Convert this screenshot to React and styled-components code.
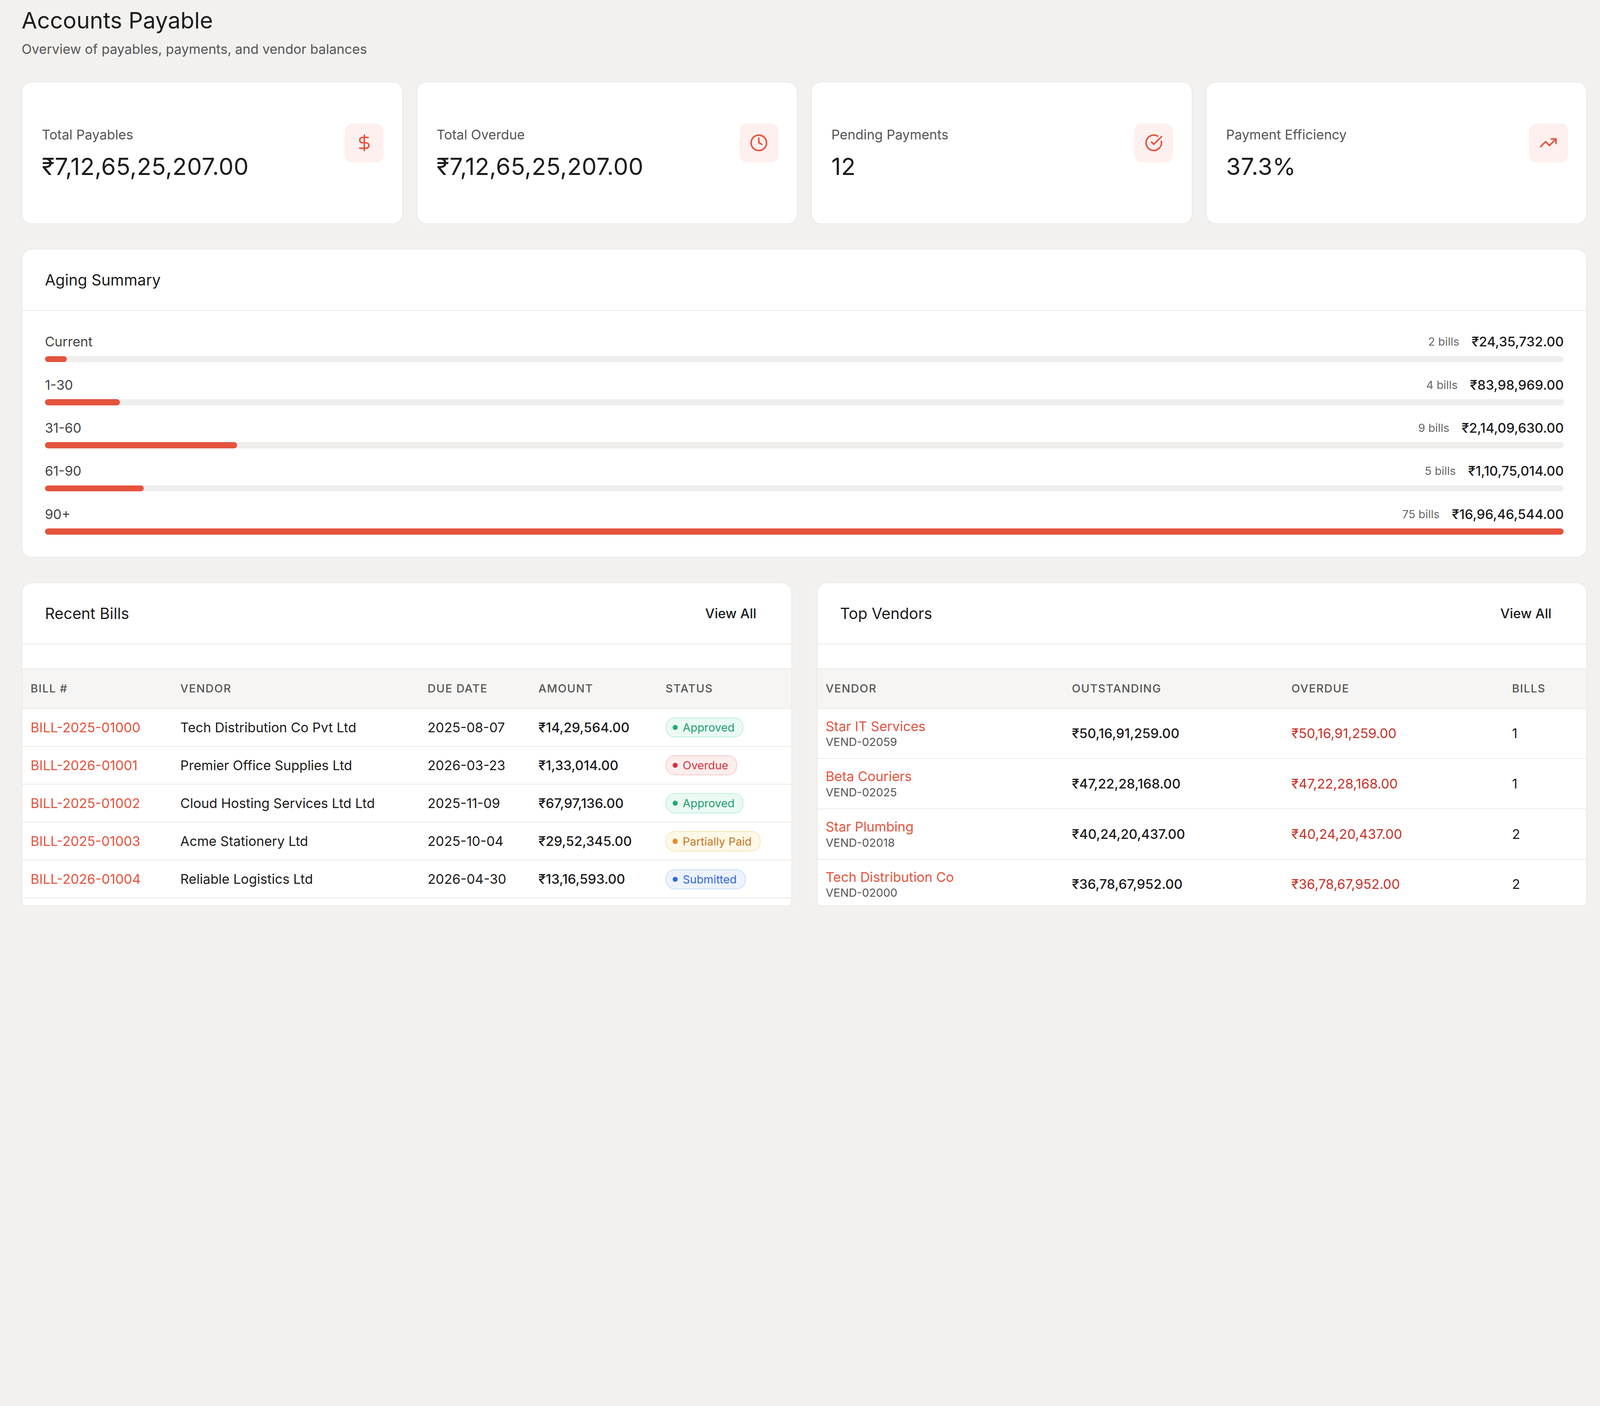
import React from 'react'
import styled, { createGlobalStyle } from 'styled-components'

const Global = createGlobalStyle`
  html, body { margin: 0; background: #f2f1ef; }
  body { zoom: 2.6265; font-family: Inter, "Noto Sans", sans-serif; color: #1c1c1c; }
`

const accent = '#e5533d'

const Page = styled.div`
  width: 1568px;
  height: 882px;
  overflow: hidden;
  padding: 6px 21px 0;
  box-sizing: border-box;
`
const Title = styled.h1`
  margin: 0;
  font-size: 22px;
  font-weight: 400;
  line-height: 28px;
`
const Sub = styled.p`
  margin: 6px 0 0;
  font-size: 13px;
  color: #555;
`
const Stats = styled.div`
  display: grid;
  grid-template-columns: repeat(4, 1fr);
  gap: 13px;
  margin-top: 24px;
`
const Card = styled.div`
  background: #fff;
  border-radius: 10px;
  border: 1px solid #ebe9e6;
`
const StatCard = styled(Card)`
  height: 139px;
  box-sizing: border-box;
  padding: 40px 18px 0 19px;
  display: flex;
  justify-content: space-between;
  align-items: flex-start;
`
const StatLabel = styled.div`
  font-size: 13px;
  color: #555;
  margin-top: 3px;
`
const StatValue = styled.div`
  font-size: 23px;
  margin-top: 9px;
  letter-spacing: 0.2px;
`
const IconBox = styled.div`
  width: 38px;
  height: 38px;
  border-radius: 8px;
  background: #fdf0ee;
  display: flex;
  align-items: center;
  justify-content: center;
  color: ${accent};
`
const Aging = styled(Card)`
  margin-top: 24px;
  padding-bottom: 22px;
`
const CardHead = styled.div`
  height: 59px;
  display: flex;
  align-items: center;
  justify-content: space-between;
  padding: 0 22px;
  border-bottom: 1px solid #ebe9e6;
  font-size: 15px;
`
const AgingBody = styled.div`
  padding: 22px 22px 0;
  display: flex;
  flex-direction: column;
  gap: 14px;
`
const AgeRow = styled.div`
  display: flex;
  flex-direction: column;
  gap: 6px;
`
const AgeTop = styled.div`
  display: flex;
  justify-content: space-between;
  align-items: center;
  font-size: 13px;
  color: #444;
  height: 16px;
`
const AgeRight = styled.div`
  display: flex;
  align-items: center;
  gap: 12px;
  span { font-size: 11px; color: #666; }
  b { font-weight: 500; color: #1c1c1c; font-size: 13px; }
`
const Track = styled.div`
  height: 6px;
  border-radius: 3px;
  background: #efeeec;
  overflow: hidden;
`
const Fill = styled.div`
  height: 100%;
  border-radius: 3px;
  background: ${accent};
`
const Bottom = styled.div`
  display: grid;
  grid-template-columns: 751px 751px;
  gap: 24px;
  margin-top: 24px;
`
const ViewAll = styled.span`
  font-size: 13px;
  font-weight: 500;
  margin-right: 12px;
`
const Table = styled.table`
  width: 100%;
  border-collapse: collapse;
  margin-top: 23px;
  font-size: 13px;
  th {
    background: #f6f5f3;
    height: 38px;
    text-align: left;
    font-weight: 500;
    font-size: 11px;
    letter-spacing: 0.6px;
    color: #555;
    padding: 0 8px;
    border-top: 1px solid #ebe9e6;
    border-bottom: 1px solid #ebe9e6;
  }
  td {
    padding: 0 8px;
    border-bottom: 1px solid #ebe9e6;
  }
`
const BillRow = styled.tr`
  height: 37px;
`
const VendRow = styled.tr`
  height: 49px;
`
const Link = styled.span`
  color: ${accent};
  font-size: 13px;
`
const Code = styled.div`
  font-size: 11px;
  color: #555;
  margin-top: 1px;
`
const Red = styled.span`
  color: #c8322a;
`
const badge = {
  Approved: ['#eafaf3', '#bfeedd', '#1f9d6a', '#1faa72'],
  Overdue: ['#fdeeee', '#f6c9c9', '#d6333a', '#e02c3a'],
  'Partially Paid': ['#fef8e8', '#f7e3b5', '#c7731f', '#ea8a2a'],
  Submitted: ['#ecf3fe', '#c6dbfa', '#3467d6', '#2f6ae0'],
}
const Badge = styled.span`
  display: inline-flex;
  align-items: center;
  gap: 5px;
  height: 18px;
  padding: 0 8px 0 6px;
  border-radius: 9px;
  font-size: 11px;
  background: ${p => badge[p.$s][0]};
  border: 1px solid ${p => badge[p.$s][1]};
  color: ${p => badge[p.$s][2]};
  &::before {
    content: '';
    width: 5px;
    height: 5px;
    border-radius: 50%;
    background: ${p => badge[p.$s][3]};
  }
`

const Svg = ({ children }) => (
  <svg width="18" height="18" viewBox="0 0 24 24" fill="none" stroke="currentColor" strokeWidth="2" strokeLinecap="round" strokeLinejoin="round">{children}</svg>
)

const stats = [
  ['Total Payables', '₹7,12,65,25,207.00', <Svg><line x1="12" y1="2" x2="12" y2="22" /><path d="M17 5H9.5a3.5 3.5 0 0 0 0 7h5a3.5 3.5 0 0 1 0 7H6" /></Svg>],
  ['Total Overdue', '₹7,12,65,25,207.00', <Svg><circle cx="12" cy="12" r="10" /><path d="M12 6v6l4 2" /></Svg>],
  ['Pending Payments', '12', <Svg><path d="M21.8 10A10 10 0 1 1 17 3.34" /><path d="m9 11 3 3L22 4" /></Svg>],
  ['Payment Efficiency', '37.3%', <Svg><path d="M16 7h6v6" /><path d="m22 7-8.5 8.5-5-5L2 17" /></Svg>],
]

const aging = [
  ['Current', '2 bills', '₹24,35,732.00', 1.45],
  ['1-30', '4 bills', '₹83,98,969.00', 4.95],
  ['31-60', '9 bills', '₹2,14,09,630.00', 12.65],
  ['61-90', '5 bills', '₹1,10,75,014.00', 6.5],
  ['90+', '75 bills', '₹16,96,46,544.00', 100],
]

const bills = [
  ['BILL-2025-01000', 'Tech Distribution Co Pvt Ltd', '2025-08-07', '₹14,29,564.00', 'Approved'],
  ['BILL-2026-01001', 'Premier Office Supplies Ltd', '2026-03-23', '₹1,33,014.00', 'Overdue'],
  ['BILL-2025-01002', 'Cloud Hosting Services Ltd Ltd', '2025-11-09', '₹67,97,136.00', 'Approved'],
  ['BILL-2025-01003', 'Acme Stationery Ltd', '2025-10-04', '₹29,52,345.00', 'Partially Paid'],
  ['BILL-2026-01004', 'Reliable Logistics Ltd', '2026-04-30', '₹13,16,593.00', 'Submitted'],
]

const vendors = [
  ['Star IT Services', 'VEND-02059', '₹50,16,91,259.00', 1],
  ['Beta Couriers', 'VEND-02025', '₹47,22,28,168.00', 1],
  ['Star Plumbing', 'VEND-02018', '₹40,24,20,437.00', 2],
  ['Tech Distribution Co', 'VEND-02000', '₹36,78,67,952.00', 2],
]

export default function App() {
  return (
    <Page>
      <Global />
      <Title>Accounts Payable</Title>
      <Sub>Overview of payables, payments, and vendor balances</Sub>
      <Stats>
        {stats.map(([l, v, icon]) => (
          <StatCard key={l}>
            <div>
              <StatLabel>{l}</StatLabel>
              <StatValue>{v}</StatValue>
            </div>
            <IconBox>{icon}</IconBox>
          </StatCard>
        ))}
      </Stats>
      <Aging>
        <CardHead>Aging Summary</CardHead>
        <AgingBody>
          {aging.map(([l, n, amt, pct]) => (
            <AgeRow key={l}>
              <AgeTop>
                <span>{l}</span>
                <AgeRight><span>{n}</span><b>{amt}</b></AgeRight>
              </AgeTop>
              <Track><Fill style={{ width: pct + '%' }} /></Track>
            </AgeRow>
          ))}
        </AgingBody>
      </Aging>
      <Bottom>
        <Card>
          <CardHead>Recent Bills<ViewAll>View All</ViewAll></CardHead>
          <Table>
            <thead>
              <tr><th style={{ width: 130 }}>BILL #</th><th style={{ width: 225 }}>VENDOR</th><th style={{ width: 92 }}>DUE DATE</th><th style={{ width: 108 }}>AMOUNT</th><th>STATUS</th></tr>
            </thead>
            <tbody>
              {bills.map(b => (
                <BillRow key={b[0]}>
                  <td><Link>{b[0]}</Link></td>
                  <td>{b[1]}</td>
                  <td>{b[2]}</td>
                  <td style={{ fontWeight: 500 }}>{b[3]}</td>
                  <td><Badge $s={b[4]}>{b[4]}</Badge></td>
                </BillRow>
              ))}
            </tbody>
          </Table>
        </Card>
        <Card>
          <CardHead>Top Vendors<ViewAll>View All</ViewAll></CardHead>
          <Table>
            <thead>
              <tr><th style={{ width: 224 }}>VENDOR</th><th style={{ width: 198 }}>OUTSTANDING</th><th style={{ width: 199 }}>OVERDUE</th><th>BILLS</th></tr>
            </thead>
            <tbody>
              {vendors.map(v => (
                <VendRow key={v[0]}>
                  <td><Link>{v[0]}</Link><Code>{v[1]}</Code></td>
                  <td style={{ fontWeight: 500 }}>{v[2]}</td>
                  <td><Red>{v[2]}</Red></td>
                  <td>{v[3]}</td>
                </VendRow>
              ))}
            </tbody>
          </Table>
        </Card>
      </Bottom>
    </Page>
  )
}
